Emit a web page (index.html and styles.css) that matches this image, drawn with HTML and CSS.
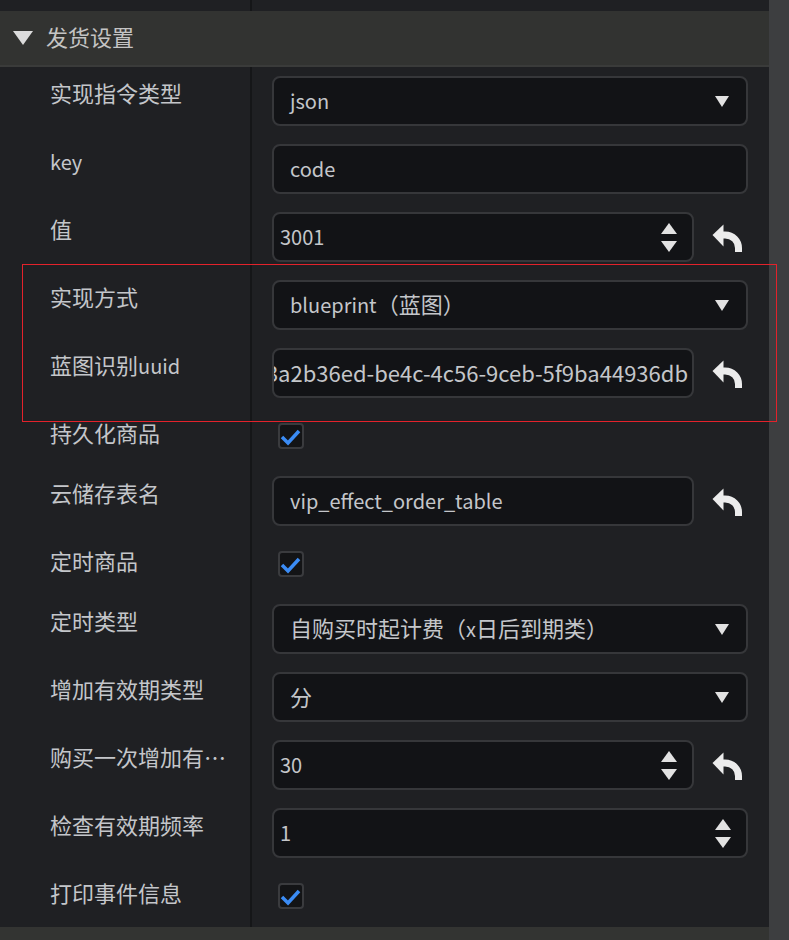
FILE: index.html
```html
<!DOCTYPE html>
<html lang="zh">
<head>
<meta charset="utf-8">
<title>发货设置</title>
<link rel="stylesheet" href="styles.css">
</head>
<body>
<div class="app">
  <div class="main">
    <div class="strip"><div class="strip-left"></div></div>
    <div class="header">
      <svg class="header-tri" width="20" height="14" viewBox="0 0 20 14"><path d="M0 0H20L10 14Z"/></svg>
      <span class="header-title">发货设置</span>
    </div>
    <div class="rows">
      <div class="row">
        <div class="label">实现指令类型</div>
        <div class="field">
          <div class="box select"><span class="val"><span class="lt">json</span></span>
            <svg class="caret" width="14" height="11" viewBox="0 0 14 11"><path d="M0 0H14L7 11Z"/></svg></div>
        </div>
      </div>
      <div class="row">
        <div class="label"><span class="lt">key</span></div>
        <div class="field"><div class="box"><span class="val"><span class="lt">code</span></span></div></div>
      </div>
      <div class="row">
        <div class="label">值</div>
        <div class="field">
          <div class="box num"><span class="val"><span class="lt">3001</span></span>
            <svg class="spin" width="16" height="29" viewBox="0 0 16 29"><path d="M8 0L16 11H0Z"/><path d="M0 18H16L8 29Z"/></svg></div>
          <div class="reset"><svg width="30" height="28" viewBox="0 0 30 28"><path class="fill" d="M0.5 11L11.5 0.5V22.5Z"/><path class="stroke" d="M10 11H13C21 11 26.5 17 26.5 24V28"/></svg></div>
        </div>
      </div>
      <div class="row">
        <div class="label">实现方式</div>
        <div class="field">
          <div class="box select"><span class="val"><span class="lt">blueprint</span>（蓝图）</span>
            <svg class="caret" width="14" height="11" viewBox="0 0 14 11"><path d="M0 0H14L7 11Z"/></svg></div>
        </div>
      </div>
      <div class="row">
        <div class="label">蓝图识别<span class="lt">uuid</span></div>
        <div class="field">
          <div class="box scrolled"><span class="val">3a2b36ed-be4c-4c56-9ceb-5f9ba44936db</span></div>
          <div class="reset"><svg width="30" height="28" viewBox="0 0 30 28"><path class="fill" d="M0.5 11L11.5 0.5V22.5Z"/><path class="stroke" d="M10 11H13C21 11 26.5 17 26.5 24V28"/></svg></div>
        </div>
      </div>
      <div class="row check-row">
        <div class="label">持久化商品</div>
        <div class="field">
          <span class="checkbox"><svg width="26" height="26" viewBox="0 0 26 26"><path d="M4 14L10 20L21 8"/></svg></span>
        </div>
      </div>
      <div class="row">
        <div class="label">云储存表名</div>
        <div class="field">
          <div class="box"><span class="val"><span class="lt">vip_effect_order_table</span></span></div>
          <div class="reset"><svg width="30" height="28" viewBox="0 0 30 28"><path class="fill" d="M0.5 11L11.5 0.5V22.5Z"/><path class="stroke" d="M10 11H13C21 11 26.5 17 26.5 24V28"/></svg></div>
        </div>
      </div>
      <div class="row check-row">
        <div class="label">定时商品</div>
        <div class="field">
          <span class="checkbox"><svg width="26" height="26" viewBox="0 0 26 26"><path d="M4 14L10 20L21 8"/></svg></span>
        </div>
      </div>
      <div class="row">
        <div class="label">定时类型</div>
        <div class="field">
          <div class="box select"><span class="val">自购买时起计费（<span class="lt">x</span>日后到期类）</span>
            <svg class="caret" width="14" height="11" viewBox="0 0 14 11"><path d="M0 0H14L7 11Z"/></svg></div>
        </div>
      </div>
      <div class="row">
        <div class="label">增加有效期类型</div>
        <div class="field">
          <div class="box select"><span class="val">分</span>
            <svg class="caret" width="14" height="11" viewBox="0 0 14 11"><path d="M0 0H14L7 11Z"/></svg></div>
        </div>
      </div>
      <div class="row">
        <div class="label label-ellip"><span class="ellip">购买一次增加有效期时长</span></div>
        <div class="field">
          <div class="box num"><span class="val"><span class="lt">30</span></span>
            <svg class="spin" width="16" height="29" viewBox="0 0 16 29"><path d="M8 0L16 11H0Z"/><path d="M0 18H16L8 29Z"/></svg></div>
          <div class="reset"><svg width="30" height="28" viewBox="0 0 30 28"><path class="fill" d="M0.5 11L11.5 0.5V22.5Z"/><path class="stroke" d="M10 11H13C21 11 26.5 17 26.5 24V28"/></svg></div>
        </div>
      </div>
      <div class="row">
        <div class="label">检查有效期频率</div>
        <div class="field">
          <div class="box num"><span class="val"><span class="lt">1</span></span>
            <svg class="spin" width="16" height="29" viewBox="0 0 16 29"><path d="M8 0L16 11H0Z"/><path d="M0 18H16L8 29Z"/></svg></div>
        </div>
      </div>
      <div class="row check-row">
        <div class="label">打印事件信息</div>
        <div class="field">
          <span class="checkbox"><svg width="26" height="26" viewBox="0 0 26 26"><path d="M4 14L10 20L21 8"/></svg></span>
        </div>
      </div>
    </div>
    <div class="footer"></div>
  </div>
  <div class="scrollbar"></div>
</div>
<div class="highlight"></div>
</body>
</html>
```
FILE: styles.css
```css
* { box-sizing: border-box; }
html, body { margin: 0; padding: 0; }
body {
  width: 789px;
  height: 940px;
  overflow: hidden;
  background: #1f2023;
  font-family: "Noto Sans CJK SC", "Noto Sans", sans-serif;
  font-size: 22px;
  color: #c4c6ca;
  position: relative;
}
.lt { font-size: 20px; }
.app { display: flex; width: 789px; height: 940px; }
.main { flex: 1; display: flex; flex-direction: column; min-width: 0; }
.scrollbar { width: 20px; background: #3d3e40; }

.strip { height: 11px; display: flex; }
.strip-left { width: 252px; border-right: 2px solid #151618; }

.header {
  height: 56px;
  background: #323331;
  border-bottom: 2px solid #3a3b3a;
  display: flex;
  align-items: center;
  padding-left: 13px;
  gap: 13px;
  color: #c4c4c4;
  line-height: 30px;
}
.header-title { position: relative; top: -2px; }
.header-tri { fill: #dcdcdc; margin-top: -1px; }

.rows { display: flex; flex-direction: column; }
.row { display: flex; height: 68px; }
.row.check-row { height: 60px; }

.label {
  width: 252px;
  flex: none;
  border-right: 2px solid #151618;
  padding: 10px 28px 0 50px;
  line-height: 30px;
  white-space: nowrap;
  overflow: hidden;
}
.label.label-ellip { padding-right: 14px; }
.ellip {
  display: block;
  overflow: hidden;
  text-overflow: ellipsis;
  white-space: nowrap;
}

.field {
  flex: 1;
  display: flex;
  align-items: flex-start;
  padding: 9px 21px 0 20px;
  min-width: 0;
}
.check-row .field { padding-top: 16px; }

.box {
  flex: 1;
  min-width: 0;
  height: 50px;
  background: #121316;
  border: 2px solid #36373a;
  border-radius: 8px;
  display: flex;
  align-items: center;
  padding: 0 17px 2px 16px;
  line-height: 30px;
  white-space: nowrap;
  overflow: hidden;
}
.box .val { flex: 1; min-width: 0; }
.box.num { padding-left: 6px; padding-right: 15px; }
.box.scrolled { justify-content: flex-end; padding: 0 4px 2px 0; }
.box.scrolled .val { flex: none; }
.caret { fill: #e2e2e2; flex: none; margin-top: 2px; }
.spin { fill: #e2e2e2; flex: none; margin-top: 2px; }

.reset {
  width: 54px;
  height: 50px;
  flex: none;
  display: flex;
  align-items: center;
  justify-content: flex-end;
  padding-right: 6px;
}
.reset svg { margin-top: 1px; }
.reset .fill { fill: #ececec; }
.reset .stroke { fill: none; stroke: #ececec; stroke-width: 7; }

.checkbox {
  width: 26px;
  height: 26px;
  margin-left: 6px;
  background: #131416;
  border: 2px solid #3a3b3e;
  border-radius: 4px;
  position: relative;
}
.checkbox svg { position: absolute; left: -2px; top: -2px; }
.checkbox path { fill: none; stroke: #3b8cf5; stroke-width: 3.5; }

.footer { flex: 1; background: #333432; }

.highlight {
  position: absolute;
  left: 22px;
  top: 264px;
  width: 755px;
  height: 158px;
  border: 1px solid #e3222b;
  pointer-events: none;
}
```
